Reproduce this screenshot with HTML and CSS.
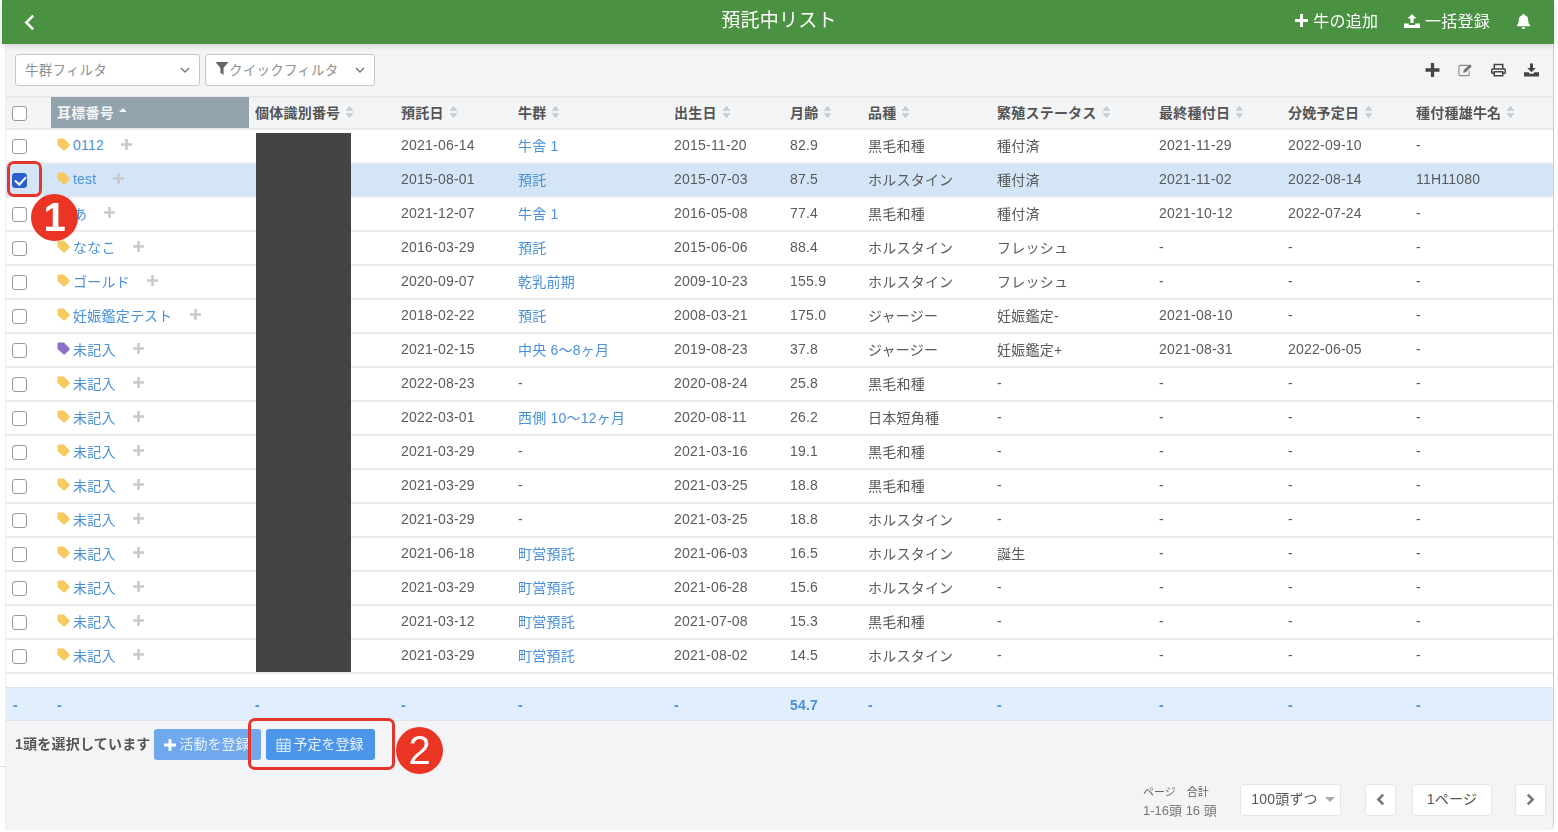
FILE: index.html
```html
<!DOCTYPE html>
<html lang="ja">
<head>
<meta charset="utf-8">
<title>預託中リスト</title>
<link rel="stylesheet" href="styles.css">
</head>
<body>
<svg class="defs" aria-hidden="true">
  <symbol id="sort" viewBox="0 0 8 12"><path d="M4 0.5 7.5 4.8H.5zM4 11.5 .5 7.2h7z"/></symbol>
  <symbol id="tag" viewBox="0 0 14 14"><path d="M.5 1.800C.5 1 1 .5 1.800.5H6.600c.4 0 .8.1 1.100.4l5.700 5.700c.5.5.5 1.300 0 1.800l-4.800 4.800c-.5.5-1.300.5-1.800 0L.9 7.700C.6 7.400.5 7 .5 6.600z"/></symbol>
  <symbol id="plus" viewBox="0 0 12 12"><path d="M4.600 0h2.800v4.600H12v2.800H7.400V12H4.600V7.400H0V4.600h4.600z"/></symbol>
  <symbol id="chev" viewBox="0 0 10 6"><path d="M1 1 5 5 9 1" fill="none" stroke="currentColor" stroke-width="1.400"/></symbol>
</svg>
<div class="page">
  <header class="topbar">
    <svg class="back" viewBox="0 0 10 16"><path d="M8.500 1.500 2 8l6.500 6.500" fill="none" stroke="currentColor" stroke-width="2.400"/></svg>
    <h1 class="title">預託中リスト</h1>
    <nav class="topnav">
      <span class="topitem"><svg class="ti"><use href="#plus"/></svg>牛の追加</span>
      <span class="topitem"><svg class="ti wide" viewBox="0 0 16 14"><path d="M8 0 12.500 4.600H9.600V9H6.400V4.600H3.500zM0 9.500h4.800v1.400h6.400V9.500H16V14H0z"/></svg>一括登録</span>
      <svg class="bell" viewBox="0 0 16 16"><path d="M8 0c.7 0 1.200.5 1.200 1.200 2.400.5 3.800 2.300 3.800 4.800 0 3 .8 4.500 2 6v1H1v-1c1.200-1.500 2-3 2-6 0-2.500 1.400-4.300 3.800-4.800C6.800.5 7.300 0 8 0zM6 14h4c0 1.200-.9 2-2 2s-2-.8-2-2z"/></svg>
    </nav>
  </header>
  <main class="main">
    <div class="filters">
      <div class="select s1"><span>牛群フィルタ</span><svg class="chev"><use href="#chev"/></svg></div>
      <div class="select s2"><span class="fl"><svg class="funnel" viewBox="0 0 14 14"><path d="M0 0h14L8.700 6.500V14L5.300 11.500v-5z"/></svg>クイックフィルタ</span><svg class="chev"><use href="#chev"/></svg></div>
      <div class="tools">
        <svg class="tool"><use href="#plus"/></svg>
        <svg class="tool soft" viewBox="0 0 16 14"><path d="M11 2H2.500C1.700 2 1 2.700 1 3.500v8c0 .8.700 1.500 1.500 1.500h8c.8 0 1.500-.7 1.500-1.500V8" fill="none" stroke="currentColor" stroke-width="1.200"/><path d="M6 7 12.500.8l2.200 2.200L8.300 9.300 5.600 9.800z"/></svg>
        <svg class="tool" viewBox="0 0 16 14"><path d="M3.500 6V1h9v5M3.500 10.500H1.500A.7.7 0 0 1 .8 9.800V6.700c0-.5.400-.9.900-.9h12.600c.5 0 .9.400.9.900v3.100a.7.7 0 0 1-.7.7H12.500M3.500 8.800h9v4.300h-9z" fill="none" stroke="currentColor" stroke-width="1.600"/></svg>
        <svg class="tool" viewBox="0 0 16 14"><path d="M6.400 0h3.200v4.800h2.900L8 9.400 3.500 4.800h2.900zM0 9.500h4.800l1.400 1.400h3.600l1.400-1.400H16V14H0z"/></svg>
      </div>
    </div>

    <div class="row head">
      <div class="cell"><input type="checkbox" class="check" aria-label="全選択"></div>
      <div class="cell active">耳標番号<span class="asc"></span></div>
      <div class="cell">個体識別番号<svg class="sort"><use href="#sort"/></svg></div>
      <div class="cell">預託日<svg class="sort"><use href="#sort"/></svg></div>
      <div class="cell">牛群<svg class="sort"><use href="#sort"/></svg></div>
      <div class="cell">出生日<svg class="sort"><use href="#sort"/></svg></div>
      <div class="cell">月齢<svg class="sort"><use href="#sort"/></svg></div>
      <div class="cell">品種<svg class="sort"><use href="#sort"/></svg></div>
      <div class="cell">繁殖ステータス<svg class="sort"><use href="#sort"/></svg></div>
      <div class="cell">最終種付日<svg class="sort"><use href="#sort"/></svg></div>
      <div class="cell">分娩予定日<svg class="sort"><use href="#sort"/></svg></div>
      <div class="cell">種付種雄牛名<svg class="sort"><use href="#sort"/></svg></div>
    </div>

    <div class="body">
      <div class="row"><div class="cell"><input type="checkbox" class="check"></div><div class="cell"><svg class="tag"><use href="#tag"/></svg><a class="link">0112</a><svg class="add"><use href="#plus"/></svg></div><div class="cell"></div><div class="cell">2021-06-14</div><div class="cell"><a class="link">牛舎 1</a></div><div class="cell">2015-11-20</div><div class="cell">82.9</div><div class="cell">黒毛和種</div><div class="cell">種付済</div><div class="cell">2021-11-29</div><div class="cell">2022-09-10</div><div class="cell">-</div></div>
      <div class="row selected"><div class="cell"><input type="checkbox" class="check" checked></div><div class="cell"><svg class="tag"><use href="#tag"/></svg><a class="link">test</a><svg class="add"><use href="#plus"/></svg></div><div class="cell"></div><div class="cell">2015-08-01</div><div class="cell"><a class="link">預託</a></div><div class="cell">2015-07-03</div><div class="cell">87.5</div><div class="cell">ホルスタイン</div><div class="cell">種付済</div><div class="cell">2021-11-02</div><div class="cell">2022-08-14</div><div class="cell">11H11080</div></div>
      <div class="row"><div class="cell"><input type="checkbox" class="check"></div><div class="cell"><svg class="tag"><use href="#tag"/></svg><a class="link">あ</a><svg class="add"><use href="#plus"/></svg></div><div class="cell"></div><div class="cell">2021-12-07</div><div class="cell"><a class="link">牛舎 1</a></div><div class="cell">2016-05-08</div><div class="cell">77.4</div><div class="cell">黒毛和種</div><div class="cell">種付済</div><div class="cell">2021-10-12</div><div class="cell">2022-07-24</div><div class="cell">-</div></div>
      <div class="row"><div class="cell"><input type="checkbox" class="check"></div><div class="cell"><svg class="tag"><use href="#tag"/></svg><a class="link">ななこ</a><svg class="add"><use href="#plus"/></svg></div><div class="cell"></div><div class="cell">2016-03-29</div><div class="cell"><a class="link">預託</a></div><div class="cell">2015-06-06</div><div class="cell">88.4</div><div class="cell">ホルスタイン</div><div class="cell">フレッシュ</div><div class="cell">-</div><div class="cell">-</div><div class="cell">-</div></div>
      <div class="row"><div class="cell"><input type="checkbox" class="check"></div><div class="cell"><svg class="tag"><use href="#tag"/></svg><a class="link">ゴールド</a><svg class="add"><use href="#plus"/></svg></div><div class="cell"></div><div class="cell">2020-09-07</div><div class="cell"><a class="link">乾乳前期</a></div><div class="cell">2009-10-23</div><div class="cell">155.9</div><div class="cell">ホルスタイン</div><div class="cell">フレッシュ</div><div class="cell">-</div><div class="cell">-</div><div class="cell">-</div></div>
      <div class="row"><div class="cell"><input type="checkbox" class="check"></div><div class="cell"><svg class="tag"><use href="#tag"/></svg><a class="link">妊娠鑑定テスト</a><svg class="add"><use href="#plus"/></svg></div><div class="cell"></div><div class="cell">2018-02-22</div><div class="cell"><a class="link">預託</a></div><div class="cell">2008-03-21</div><div class="cell">175.0</div><div class="cell">ジャージー</div><div class="cell">妊娠鑑定-</div><div class="cell">2021-08-10</div><div class="cell">-</div><div class="cell">-</div></div>
      <div class="row"><div class="cell"><input type="checkbox" class="check"></div><div class="cell"><svg class="tag purple"><use href="#tag"/></svg><a class="link">未記入</a><svg class="add"><use href="#plus"/></svg></div><div class="cell"></div><div class="cell">2021-02-15</div><div class="cell"><a class="link">中央 6〜8ヶ月</a></div><div class="cell">2019-08-23</div><div class="cell">37.8</div><div class="cell">ジャージー</div><div class="cell">妊娠鑑定+</div><div class="cell">2021-08-31</div><div class="cell">2022-06-05</div><div class="cell">-</div></div>
      <div class="row"><div class="cell"><input type="checkbox" class="check"></div><div class="cell"><svg class="tag"><use href="#tag"/></svg><a class="link">未記入</a><svg class="add"><use href="#plus"/></svg></div><div class="cell"></div><div class="cell">2022-08-23</div><div class="cell">-</div><div class="cell">2020-08-24</div><div class="cell">25.8</div><div class="cell">黒毛和種</div><div class="cell">-</div><div class="cell">-</div><div class="cell">-</div><div class="cell">-</div></div>
      <div class="row"><div class="cell"><input type="checkbox" class="check"></div><div class="cell"><svg class="tag"><use href="#tag"/></svg><a class="link">未記入</a><svg class="add"><use href="#plus"/></svg></div><div class="cell"></div><div class="cell">2022-03-01</div><div class="cell"><a class="link">西側 10〜12ヶ月</a></div><div class="cell">2020-08-11</div><div class="cell">26.2</div><div class="cell">日本短角種</div><div class="cell">-</div><div class="cell">-</div><div class="cell">-</div><div class="cell">-</div></div>
      <div class="row"><div class="cell"><input type="checkbox" class="check"></div><div class="cell"><svg class="tag"><use href="#tag"/></svg><a class="link">未記入</a><svg class="add"><use href="#plus"/></svg></div><div class="cell"></div><div class="cell">2021-03-29</div><div class="cell">-</div><div class="cell">2021-03-16</div><div class="cell">19.1</div><div class="cell">黒毛和種</div><div class="cell">-</div><div class="cell">-</div><div class="cell">-</div><div class="cell">-</div></div>
      <div class="row"><div class="cell"><input type="checkbox" class="check"></div><div class="cell"><svg class="tag"><use href="#tag"/></svg><a class="link">未記入</a><svg class="add"><use href="#plus"/></svg></div><div class="cell"></div><div class="cell">2021-03-29</div><div class="cell">-</div><div class="cell">2021-03-25</div><div class="cell">18.8</div><div class="cell">黒毛和種</div><div class="cell">-</div><div class="cell">-</div><div class="cell">-</div><div class="cell">-</div></div>
      <div class="row"><div class="cell"><input type="checkbox" class="check"></div><div class="cell"><svg class="tag"><use href="#tag"/></svg><a class="link">未記入</a><svg class="add"><use href="#plus"/></svg></div><div class="cell"></div><div class="cell">2021-03-29</div><div class="cell">-</div><div class="cell">2021-03-25</div><div class="cell">18.8</div><div class="cell">ホルスタイン</div><div class="cell">-</div><div class="cell">-</div><div class="cell">-</div><div class="cell">-</div></div>
      <div class="row"><div class="cell"><input type="checkbox" class="check"></div><div class="cell"><svg class="tag"><use href="#tag"/></svg><a class="link">未記入</a><svg class="add"><use href="#plus"/></svg></div><div class="cell"></div><div class="cell">2021-06-18</div><div class="cell"><a class="link">町営預託</a></div><div class="cell">2021-06-03</div><div class="cell">16.5</div><div class="cell">ホルスタイン</div><div class="cell">誕生</div><div class="cell">-</div><div class="cell">-</div><div class="cell">-</div></div>
      <div class="row"><div class="cell"><input type="checkbox" class="check"></div><div class="cell"><svg class="tag"><use href="#tag"/></svg><a class="link">未記入</a><svg class="add"><use href="#plus"/></svg></div><div class="cell"></div><div class="cell">2021-03-29</div><div class="cell"><a class="link">町営預託</a></div><div class="cell">2021-06-28</div><div class="cell">15.6</div><div class="cell">ホルスタイン</div><div class="cell">-</div><div class="cell">-</div><div class="cell">-</div><div class="cell">-</div></div>
      <div class="row"><div class="cell"><input type="checkbox" class="check"></div><div class="cell"><svg class="tag"><use href="#tag"/></svg><a class="link">未記入</a><svg class="add"><use href="#plus"/></svg></div><div class="cell"></div><div class="cell">2021-03-12</div><div class="cell"><a class="link">町営預託</a></div><div class="cell">2021-07-08</div><div class="cell">15.3</div><div class="cell">黒毛和種</div><div class="cell">-</div><div class="cell">-</div><div class="cell">-</div><div class="cell">-</div></div>
      <div class="row"><div class="cell"><input type="checkbox" class="check"></div><div class="cell"><svg class="tag"><use href="#tag"/></svg><a class="link">未記入</a><svg class="add"><use href="#plus"/></svg></div><div class="cell"></div><div class="cell">2021-03-29</div><div class="cell"><a class="link">町営預託</a></div><div class="cell">2021-08-02</div><div class="cell">14.5</div><div class="cell">ホルスタイン</div><div class="cell">-</div><div class="cell">-</div><div class="cell">-</div><div class="cell">-</div></div>
      <div class="spacer"></div>
      <div class="row summary"><div class="cell">-</div><div class="cell">-</div><div class="cell">-</div><div class="cell">-</div><div class="cell">-</div><div class="cell">-</div><div class="cell">54.7</div><div class="cell">-</div><div class="cell">-</div><div class="cell">-</div><div class="cell">-</div><div class="cell">-</div></div>
    </div>

    <div class="actions">
      <span class="count">1頭を選択しています</span>
      <button class="btn faded"><svg class="bi"><use href="#plus"/></svg>活動を登録</button>
      <button class="btn"><svg class="cal" viewBox="0 0 14 14"><path d="M1 2.500h12v11H1zM1 5.500h12M4 1v3M10 1v3M5 5.500v8M9 5.500v8M1 8.200h12M1 10.900h12" fill="none" stroke="currentColor" stroke-width=".9"/></svg>予定を登録</button>
    </div>

    <div class="pager">
      <div class="pageinfo"><div class="pi-top"><span>ページ</span><span>合計</span></div><div class="pi-bot">1-16頭 16 頭</div></div>
      <div class="pbtn per">100頭ずつ<span class="caret"></span></div>
      <div class="pbtn arrow"><svg class="pch" viewBox="0 0 8 12"><path d="M6.500 1.500 2 6l4.500 4.500" fill="none" stroke="currentColor" stroke-width="2.400"/></svg></div>
      <div class="pbtn num">1ページ</div>
      <div class="pbtn arrow"><svg class="pch" viewBox="0 0 8 12"><path d="M1.500 1.500 6 6l-4.500 4.500" fill="none" stroke="currentColor" stroke-width="2.400"/></svg></div>
    </div>
  </main>

  <div class="redact"></div>
  <div class="mark m1"></div>
  <div class="mark m2"></div>
  <div class="num-badge b1">1</div>
  <div class="num-badge b2">2</div>
</div>
</body>
</html>
```

FILE: styles.css
```css
* { box-sizing: border-box; }
html, body { margin: 0; height: 100%; background: #fff; overflow: hidden; }
body {
  font-family: "Liberation Sans", "Noto Sans CJK JP", sans-serif;
  font-size: 14px;
  letter-spacing: .22px;
  color: #5a5a5a;
}
.defs { position: absolute; width: 0; height: 0; }

.page {
  position: relative;
  width: 1558px;
  height: 832px;
  padding: 0 4px 2px 2px;
  display: flex;
  flex-direction: column;
  filter: blur(.7px);
}
.page::before {
  content: "";
  position: absolute;
  left: 0; top: 766px;
  width: 6px; height: 1px;
  background: #dcdcdc;
}

.topbar {
  flex: 0 0 44px;
  position: relative;
  z-index: 1;
  display: flex;
  align-items: center;
  padding: 0 23px 0 22px;
  background: #4a9142;
  color: #fff;
  box-shadow: 0 2px 6px rgba(0,0,0,.14);
}
.back { width: 11px; height: 17px; }
.title {
  position: absolute;
  left: 2px; right: 0; top: 8px;
  margin: 0;
  text-align: center;
  font-size: 19px;
  font-weight: 400;
  line-height: 26px;
}
.topnav { margin-left: auto; display: flex; align-items: center; gap: 26px; font-size: 16px; padding-bottom: 3px; }
.topitem { display: flex; align-items: center; gap: 5px; padding-bottom: 2px; }
.ti { width: 13px; height: 13px; fill: #fff; margin-top: 2px; }
.ti.wide { width: 16px; height: 14px; }
.bell { width: 15px; height: 15px; fill: #fff; margin-top: 1px; }

.main {
  flex: 1;
  margin-left: 3px;
  background: #f3f4f6;
  border-left: 1px solid #eef0f2;
  border-right: 1px solid #ccc;
  border-bottom-right-radius: 6px;
  display: flex;
  flex-direction: column;
  min-height: 0;
}

.filters {
  flex: 0 0 52px;
  display: flex;
  align-items: center;
  gap: 5px;
  padding: 0 14px 0 9px;
}
.select {
  height: 32px;
  display: flex;
  align-items: center;
  justify-content: space-between;
  background: #fff;
  border: 1px solid #c8c8c8;
  border-radius: 3px;
  color: #8f8f8f;
  font-size: 13.500px;
  padding: 0 9px 3px 9px;
}
.s1 { width: 185px; }
.s2 { width: 170px; }
.fl { display: flex; align-items: center; }
.funnel { width: 14px; height: 13px; fill: #666; }
.chev { width: 10px; height: 6px; color: #777; margin-top: 3px; }
.tools { margin-left: auto; display: flex; align-items: center; gap: 18px; color: #444; }
.tool { width: 15px; height: 14px; fill: #444; }
.tool.soft { fill: #777; color: #8a8a8a; }

.row {
  display: grid;
  grid-template-columns: 45px 198px 146px 117px 156px 116px 78px 129px 162px 129px 128px 143px;
  height: 34px;
  background: #fff;
  border-bottom: 2px solid #ececec;
}
.cell {
  display: flex;
  align-items: center;
  padding: 0 0 3px 6px;
  white-space: nowrap;
  min-width: 0;
}
.head {
  background: #f3f4f6;
  border-top: 2px solid #e9e9ec;
  border-bottom: 2px solid #e9e9ec;
  font-weight: 700;
  color: #555;
}
.head .cell { padding-bottom: 2px; }
.head .active { background: #93a3ae; color: #f2f4f5; margin: -1px 0 0; height: 31px; }
.asc {
  margin-left: 5px;
  margin-bottom: 3px;
  border-left: 4px solid transparent;
  border-right: 4px solid transparent;
  border-bottom: 4px solid #f2f4f5;
}
.sort { width: 9px; height: 14px; margin-left: 5px; fill: #c6ced2; }

.check {
  appearance: none;
  -webkit-appearance: none;
  position: relative;
  width: 15px;
  height: 15px;
  margin: 3px 0 0;
  background: #fff;
  border: 1.500px solid #999;
  border-radius: 3px;
}
.check:checked { background: #2c5fc9; border-color: #2c5fc9; }
.check:checked::after {
  content: "";
  position: absolute;
  left: 3.500px; top: .5px;
  width: 5px; height: 9px;
  border: solid #fff;
  border-width: 0 2.200px 2.200px 0;
  transform: rotate(42deg);
}

.link { color: #4a90d9; }
.tag { width: 13px; height: 13px; margin: 0 3px 0 0; fill: #f6ca5e; flex: none; }
.tag.purple { fill: #8f6fc9; }
.add { width: 11px; height: 11px; margin-left: 17px; fill: #c9c9c9; flex: none; }

.selected { background: #d3e5f7; }
.spacer { height: 13px; background: #fff; }
.summary {
  background: #e1eefb;
  border-top: 1px solid #d5e3f2;
  border-bottom: 1px solid #dfe3e8;
  color: #4a90d9;
  font-weight: 700;
}
.summary .cell { padding: 1px 0 0 6px; }
.summary .cell:first-child { padding-left: 7px; }

.actions {
  display: flex;
  align-items: center;
  padding: 8px 0 0 9px;
  height: 39px;
}
.count { font-weight: 700; color: #555; font-size: 14px; margin-right: 3px; padding-bottom: 4px; }
.btn {
  height: 31px;
  border: 0;
  border-radius: 3px;
  background: #4c96ea;
  color: #e8f2fd;
  font: inherit;
  font-size: 14px;
  display: flex;
  align-items: center;
  gap: 3px;
  padding: 0 10px 3px;
  margin-right: 5px;
  width: 109px;
}
.btn.faded { background: #6fa8ec; width: 107px; gap: 4px; }
.bi { width: 12px; height: 12px; fill: #fff; margin-top: 3px; }
.cal { width: 15px; height: 15px; margin-top: 3px; }

.pager {
  margin-top: auto;
  display: flex;
  align-items: center;
  justify-content: flex-end;
  padding: 0 7px 11px 0;
}
.pageinfo { width: 97px; line-height: 17px; letter-spacing: 0; padding-top: 4px; }
.pi-top { display: flex; gap: 11px; font-size: 11px; color: #666; }
.pi-bot { font-size: 13px; margin-top: 1px; color: #777; }
.pbtn {
  height: 32px;
  background: #fff;
  border: 1px solid #e6e6e6;
  border-radius: 3px;
  display: flex;
  align-items: center;
  justify-content: center;
  color: #555;
  font-size: 14px;
  padding-bottom: 3px;
}
.per { width: 101px; gap: 7px; margin-right: 24px; padding-left: 5px; }
.caret { border-left: 5px solid transparent; border-right: 5px solid transparent; border-top: 5px solid #aaa; margin-top: 3px; }
.arrow { width: 31px; padding: 0; }
.num { width: 80px; margin: 0 23px 0 16px; }
.pch { width: 9px; height: 13px; color: #777; }

/* overlays pasted on top of the screenshot */
.redact { position: absolute; left: 256px; top: 133px; width: 95px; height: 539px; background: #444; }
.mark { position: absolute; border: 3px solid #e5352a; border-radius: 7px; }
.m1 { left: 7px; top: 161px; width: 35px; height: 36px; }
.m2 { left: 248px; top: 718px; width: 147px; height: 52px; }
.num-badge {
  position: absolute;
  width: 47px;
  height: 47px;
  border-radius: 50%;
  background: #ea3524;
  color: #fff;
  font-size: 40px;
  line-height: 47px;
  text-align: center;
  letter-spacing: 0;
}
.b1 { left: 31px; top: 194px; font-weight: 700; }
.b2 { left: 396px; top: 727px; }
```
